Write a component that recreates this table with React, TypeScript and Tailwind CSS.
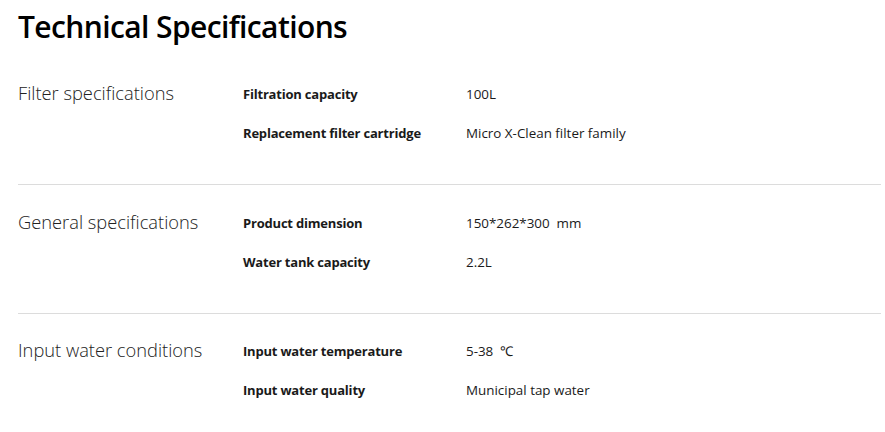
const sections = [
  {
    title: "Filter specifications",
    rows: [
      ["Filtration capacity", "100L"],
      ["Replacement filter cartridge", "Micro X-Clean filter family"],
    ],
  },
  {
    title: "General specifications",
    rows: [
      ["Product dimension", "150*262*300\u00a0 mm"],
      ["Water tank capacity", "2.2L"],
    ],
  },
  {
    title: "Input water conditions",
    rows: [
      ["Input water temperature", "5-38\u00a0 \u2103"],
      ["Input water quality", "Municipal tap water"],
    ],
  },
];

export default function App() {
  return (
    <div className="w-[885px] h-[432px] bg-white overflow-hidden pl-[18px] pr-[4px] text-[#1a1a1a] font-['Open_Sans',sans-serif]">
      <h1 className="mt-[7px] text-[30px] leading-[40px] font-semibold text-black tracking-[-0.6px]">
        Technical Specifications
      </h1>
      {sections.map((s, i) => (
        <div
          key={s.title}
          className={
            i === 0
              ? "flex pt-[37px] pb-[41px] border-b border-[#dcdcdc]"
              : i === 1
              ? "flex pt-[28px] pb-[41px] border-b border-[#dcdcdc]"
              : "flex pt-[27px]"
          }
        >
          <div className="w-[225px] -mt-[3px] text-[18.3px] font-light leading-[24px] text-[#222]">{s.title}</div>
          <div className="flex flex-col gap-[19px]">
            {s.rows.map(([k, v]) => (
              <div key={k} className="flex text-[13px] leading-[20px]">
                <div className="w-[223px] font-bold tracking-[-0.2px]">{k}</div>
                <div className="text-[13.4px]">{v}</div>
              </div>
            ))}
          </div>
        </div>
      ))}
    </div>
  );
}
